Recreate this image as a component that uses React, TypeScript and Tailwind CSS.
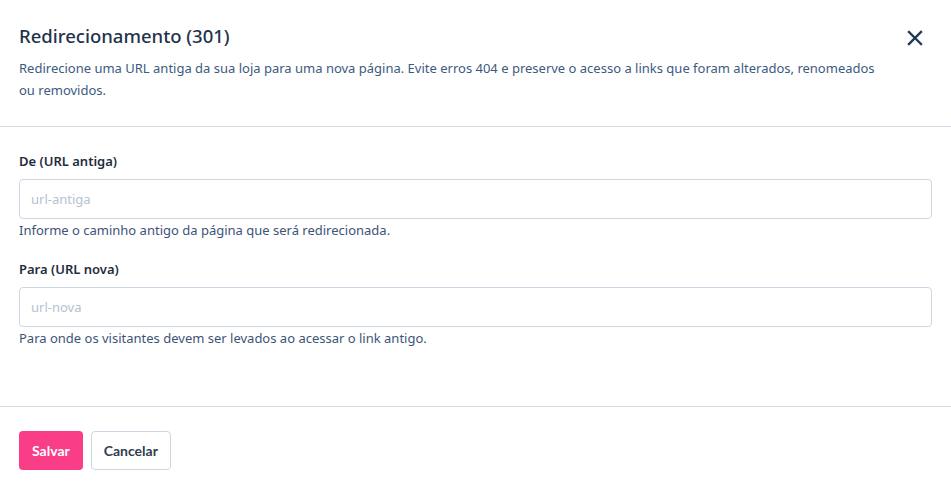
import React from 'react';

const body = { fontFamily: '"Noto Sans", "Open Sans", sans-serif' };
const btn = { fontFamily: 'Lato, "Noto Sans", sans-serif' };

const Field: React.FC<{ label: string; placeholder: string; help: string }> = ({ label, placeholder, help }) => (
  <div>
    <label className="block text-[13px] font-semibold text-[#1f2d3d] leading-[18px] mb-[9px]">{label}</label>
    <input
      placeholder={placeholder}
      className="w-full h-[40px] rounded-[4px] border border-[#cdd7e3] px-[11px] text-[13px] text-[#1f2d3d] placeholder:text-[#b5c2d2] outline-none"
    />
    <p className="mt-[1px] text-[13px] leading-[20px] text-[#3d5478]">{help}</p>
  </div>
);

export default function App() {
  return (
    <div className="w-[951px] h-[486px] bg-white" style={body}>
      <div className="flex items-start justify-between pl-[19px] pr-[28px] pt-[23px] pb-[25px] border-b border-[#d3dde8]">
        <div className="max-w-[870px]">
          <h2 className="text-[18.5px] font-medium leading-[26px] text-[#22334a]">Redirecionamento (301)</h2>
          <p className="mt-[8px] text-[13px] leading-[22px] text-[#3d5a80]">
            Redirecione uma URL antiga da sua loja para uma nova página. Evite erros 404 e preserve o acesso a links que foram alterados, renomeados ou removidos.
          </p>
        </div>
        <button className="mt-[7px] text-[#233a56]">
          <svg width="16" height="16" viewBox="0 0 16 16" fill="none" stroke="currentColor" strokeWidth="2.4" strokeLinecap="square">
            <path d="M2 2l12 12M14 2L2 14" />
          </svg>
        </button>
      </div>
      <div className="px-[19px] pt-[25px] pb-[58px] flex flex-col gap-[20px] border-b border-[#d3dde8]">
        <Field label="De (URL antiga)" placeholder="url-antiga" help="Informe o caminho antigo da página que será redirecionada." />
        <Field label="Para (URL nova)" placeholder="url-nova" help="Para onde os visitantes devem ser levados ao acessar o link antigo." />
      </div>
      <div className="flex gap-[8px] px-[19px] pt-[24px]" style={btn}>
        <button className="h-[39px] px-[13px] rounded-[4px] bg-[#f93d86] text-white text-[14px] font-bold">Salvar</button>
        <button className="h-[39px] px-[12px] rounded-[4px] border border-[#cdd7e3] bg-white text-[#2f3e52] text-[14px] font-bold">Cancelar</button>
      </div>
    </div>
  );
}
